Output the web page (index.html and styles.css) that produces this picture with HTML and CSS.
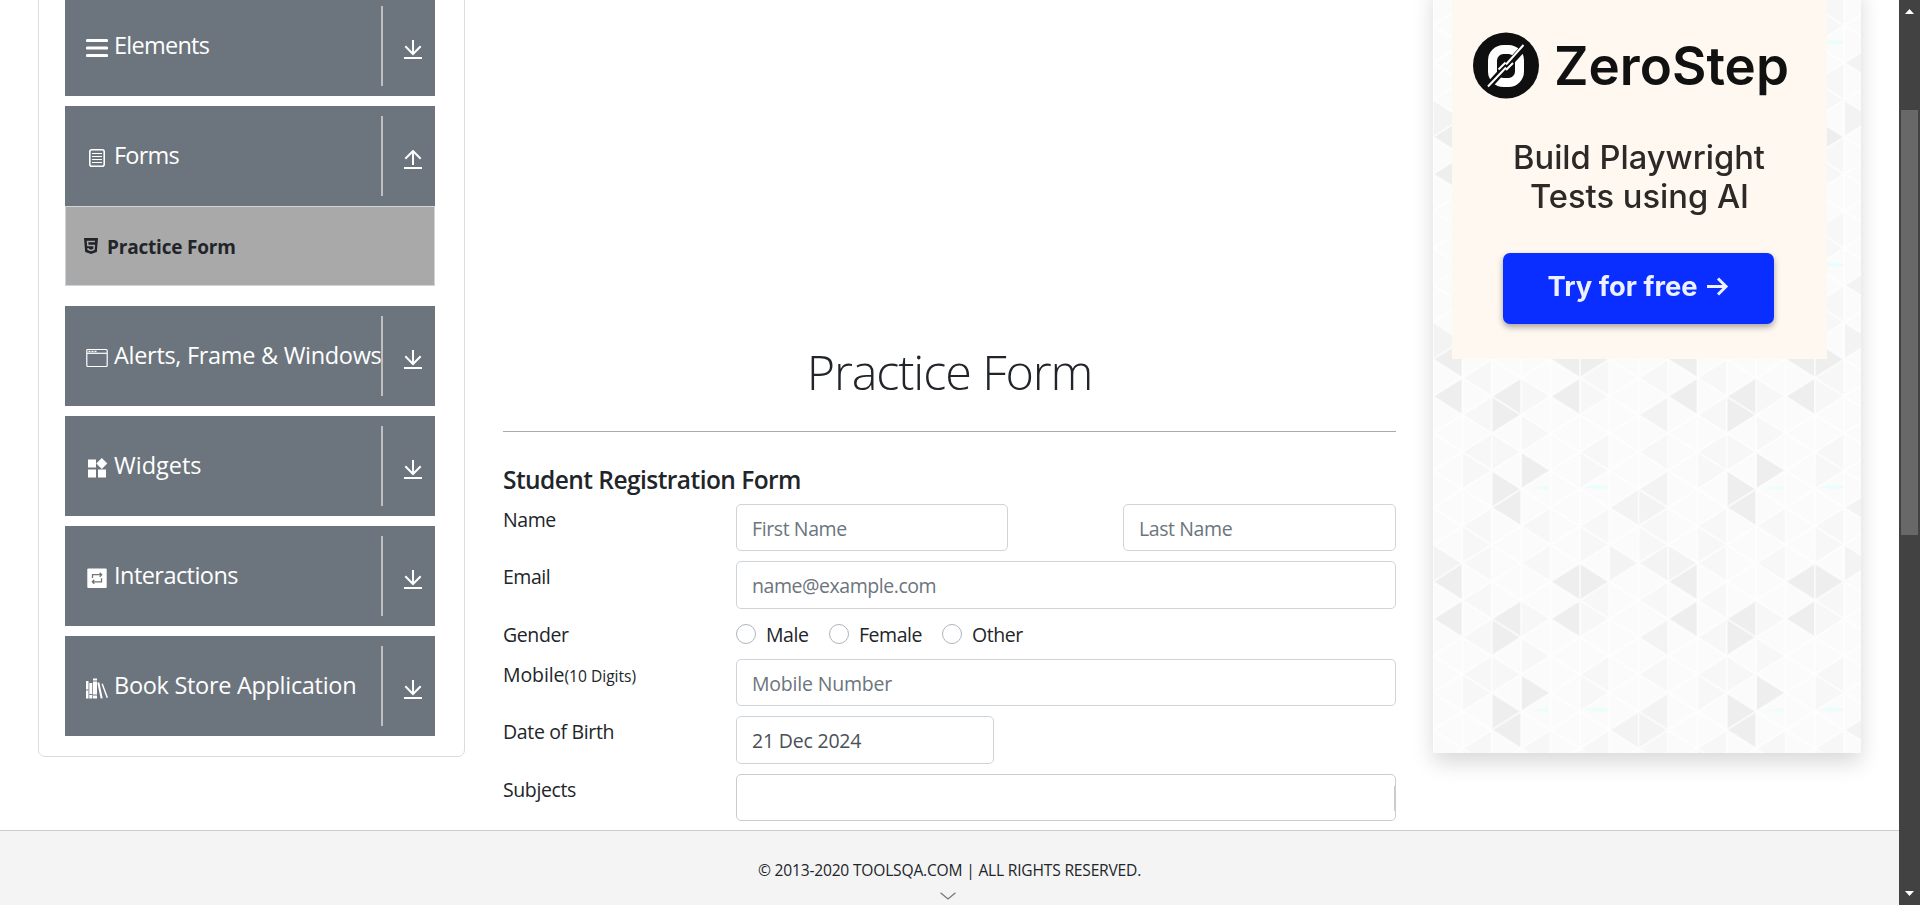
FILE: index.html
```html
<!DOCTYPE html>
<html lang="en">
<head>
<meta charset="utf-8">
<title>Practice Form</title>
<link rel="stylesheet" href="styles.css">
</head>
<body>
<svg class="defs" width="0" height="0">
  <symbol id="down" viewBox="0 0 18 20"><path d="M9 0v14M1.300 6.300 9 14l7.700-7.700M0 18h18" fill="none" stroke="#fff" stroke-width="2"/></symbol>
  <symbol id="up" viewBox="0 0 18 20"><path d="M9 15V1M1.300 8.700 9 1l7.700 7.700M0 18h18" fill="none" stroke="#fff" stroke-width="2"/></symbol>
</svg>
<div class="page">
  <div class="content">
    <nav class="sidebar">
      <div class="group">
        <svg class="icon" viewBox="0 0 22 22"><path d="M1.500 3.500h19M1.500 11h19M1.500 18.500h19" stroke="#fff" stroke-width="3.200" stroke-linecap="round"/></svg>
        <span class="name t-elements">Elements</span><span class="toggle"><svg class="arrow"><use href="#down"/></svg></span>
      </div>
      <div class="group open">
        <svg class="icon" viewBox="0 0 22 22"><rect x="3.800" y="2.800" width="14.400" height="16.400" rx="2" fill="none" stroke="#fff" stroke-width="1.600"/><path d="M6 6.500h10M6 9.500h10M6 12.500h10M6 15.500h10" stroke="#fff" stroke-width="1"/></svg>
        <span class="name t-forms">Forms</span><span class="toggle"><svg class="arrow"><use href="#up"/></svg></span>
      </div>
      <div class="sub">
        <svg class="html5" viewBox="0 0 14 16"><path d="M0 0h14l-1.200 14L7 16l-5.800-2z" fill="#212529"/><path d="M11 3.500H3.500l.3 4h6.500l-.4 4L7 12.500l-2.800-1-.1-1.500" fill="none" stroke="#a9a9a9" stroke-width="1.500"/></svg>
        <span class="subname">Practice Form</span>
      </div>
      <div class="group">
        <svg class="icon" viewBox="0 0 22 22"><rect x=".8" y="2.500" width="20.400" height="17" rx="1" fill="none" stroke="#fff" stroke-width="1.200"/><path d="M1 6.300h20" stroke="#fff" stroke-width="1.200"/><path d="M2.500 4.400h8.500" stroke="#fff" stroke-width="1.500" stroke-dasharray="2 1"/></svg>
        <span class="name t-alerts">Alerts, Frame &amp; Windows</span><span class="toggle"><svg class="arrow"><use href="#down"/></svg></span>
      </div>
      <div class="group">
        <svg class="icon" viewBox="0 0 22 22"><path d="M2 2.500h8v8H2zM2 12.500h8v8H2zM12 12.500h8v8h-8zM15.800 1l5.500 5.500-5.500 5.500-5.500-5.500z" fill="#fff"/></svg>
        <span class="name t-widgets">Widgets</span><span class="toggle"><svg class="arrow"><use href="#down"/></svg></span>
      </div>
      <div class="group">
        <svg class="icon" viewBox="0 0 22 22"><rect x="1.300" y="1.600" width="19.400" height="19.400" rx="1" fill="#fff"/><path d="M6.500 11V7.700h9M13.700 5.700l2 2-2 2M15.500 11.300v3.500h-9M8.300 12.800l-2 2 2 2" fill="none" stroke="#6c757d" stroke-width="1.300"/></svg>
        <span class="name t-inter">Interactions</span><span class="toggle"><svg class="arrow"><use href="#down"/></svg></span>
      </div>
      <div class="group">
        <svg class="icon" viewBox="0 0 22 22"><path d="M0 4h2.500v17.500H0zM3.300 6h3v15.500h-3zM7 1.500h4v20H7zM11.300 5.700l2-.5 3.400 16-2 .4zM15.500 7l1.300-.5 5.200 14-1.400.5z" fill="#fff"/><path d="M0 13h2.500M3.300 17.500h3M7 4h4M7 18h4" stroke="#6c757d" stroke-width="1"/></svg>
        <span class="name t-book">Book Store Application</span><span class="toggle"><svg class="arrow"><use href="#down"/></svg></span>
      </div>
    </nav>

    <main class="form">
      <h1 class="title"><span>Practice Form</span></h1>
      <h5 class="subtitle">Student Registration Form</h5>
      <div class="rows">
        <div class="row"><label class="label l-name">Name</label><div class="pair"><div class="input first"><span class="i-first">First Name</span></div><div class="input last"><span class="i-last">Last Name</span></div></div></div>
        <div class="row tall"><label class="label l-email">Email</label><div class="input"><span class="i-email">name@example.com</span></div></div>
        <div class="row gender"><label class="label l-gender">Gender</label>
          <div class="radios"><span class="radio"></span><span class="opt male">Male</span><span class="radio"></span><span class="opt female">Female</span><span class="radio"></span><span class="opt other">Other</span></div></div>
        <div class="row"><label class="label l-mobile">Mobile<small>(10 Digits)</small></label><div class="input"><span class="i-mobile">Mobile Number</span></div></div>
        <div class="row tall"><label class="label l-dob">Date of Birth</label><div class="input date"><span class="i-date">21 Dec 2024</span></div></div>
        <div class="row"><label class="label l-subj">Subjects</label><div class="input subjects"><i class="bar"></i></div></div>
      </div>
    </main>

    <aside class="panel">
      <svg class="mesh" width="428" height="769">
        <defs>
          <pattern id="tri" width="235" height="222.400" patternUnits="userSpaceOnUse" patternTransform="translate(0 375.300)">
            <rect width="235" height="222.400" fill="#fbfbfb"/>
            <g id="shades" transform="scale(29.375 18.533)">
              <path fill="#f7f7f7" d="M1 5l1-1v2zM7 5l1-1v2zM1 3l1-1v2zM3 5l-1-1v2zM4 4l-1-1v2zM1 9l1-1v2zM5 9l1-1v2zM3 9l1-1v2zM3 11l1-1v2zM1 11l1-1v2zM5 1l1-1v2zM6 2l-1-1v2zM4 2l-1-1v2zM1 1l1-1v2zM2 6l-1-1v2zM8 10l-1-1v2zM5 5l1-1v2zM6 10l-1-1v2zM7 1l1-1v2zM7 9l1-1v2zM2 10l-1-1v2zM6 6l-1-1v2z"/>
              <path fill="#f3f3f3" d="M7 3l1-1v2zM6 8l1-1v2zM8 8l-1-1v2zM7 7l1-1v2zM7 11l-1-1v2zM7 11l1-1v2zM1 11l-1-1v2z"/>
              <path fill="#eeeeee" d="M0 2l1-1v2zM2 2l1-1v2zM3 3l-1-1v2zM4 2l1-1v2zM4 6l-1-1v2zM3 7l-1-1v2zM2 8l1-1v2zM0 0l1-1v2zM0 12l1-1v2zM4 0l1-1v2zM4 12l1-1v2zM6 0l-1-1v2zM6 12l-1-1v2z"/>
              <path fill="none" stroke="#fff" stroke-opacity=".75" stroke-width="1.700" vector-effect="non-scaling-stroke" d="M0 0v12M1 0v12M2 0v12M3 0v12M4 0v12M5 0v12M6 0v12M7 0v12M8 0v12M0 0l8 8M0 2l8 8M0 4l8 8M0 6l6 6M0 8l4 4M0 10l2 2M2 0l6 6M4 0l4 4M6 0l2 2M0 2l2-2M0 4l4-4M0 6l6-6M0 8l8-8M0 10l8-8M0 12l8-8M2 12l6-6M4 12l4-4M6 12l2-2"/>
            </g>
            <path d="M97 129l18-2v3zM150 128l12-2 14 1-4 3z" fill="#e6fffc"/>
          </pattern>
        </defs>
        <rect width="428" height="769" fill="url(#tri)"/>
      </svg>
      <svg class="ad" viewBox="0 0 375 375">
        <rect width="375" height="375" fill="#fef8f1"/>
        <g class="soft">
          <circle cx="54" cy="81.500" r="33" fill="#0f0f0f"/>
          <rect x="40.500" y="65.500" width="27" height="33" rx="11" fill="none" stroke="#fff" stroke-width="9"/>
          <path d="M33 106 75 60" stroke="#0f0f0f" stroke-width="7"/>
          <path d="M36 102.500 54 83.500M54 80.500 71.500 61M46.500 85.500l7-7M54 86l7-7" stroke="#fff" stroke-width="2"/>
          <text x="102" y="100.500" font-size="53" font-weight="600" textLength="235" lengthAdjust="spacingAndGlyphs" fill="#111">ZeroStep</text>
          <text x="61" y="184.500" font-size="32.500" font-weight="550" textLength="252" lengthAdjust="spacingAndGlyphs" fill="#2c2927">Build Playwright</text>
          <text x="78" y="223.500" font-size="32.500" font-weight="550" textLength="219" lengthAdjust="spacingAndGlyphs" fill="#2c2927">Tests using AI</text>
          <rect class="cta" x="51" y="269" width="271" height="71" rx="7" fill="#092eff"/>
          <text x="95.500" y="312" font-size="27" font-weight="700" textLength="150" lengthAdjust="spacingAndGlyphs" fill="#edf0ff">Try for free</text>
          <path d="M255 302.500h18M266 294.500l8 8-8 8" fill="none" stroke="#edf0ff" stroke-width="3"/>
        </g>
      </svg>
    </aside>
  </div>
  <footer class="footer">
    <span class="copy">© 2013-2020 TOOLSQA.COM | ALL RIGHTS RESERVED.</span>
    <svg class="chev" viewBox="0 0 16 8"><path d="M.5.700 8 7l7.500-6.300" fill="none" stroke="#777" stroke-width="1.300"/></svg>
  </footer>
</div>
<div class="scrollbar">
  <svg class="tip" viewBox="0 0 9 5"><path d="M0 5 4.500 0 9 5z" fill="#fff"/></svg>
  <div class="thumb"></div>
  <svg class="tip" viewBox="0 0 9 5"><path d="M0 0 4.500 5 9 0z" fill="#fff"/></svg>
</div>
</body>
</html>
```
FILE: styles.css
```css
* { box-sizing: border-box; }
body { margin: 0; width: 1920px; height: 905px; overflow: hidden; display: flex; background: #fff; color: #212529; font: 19.5px/30px "Open Sans", "Noto Sans", sans-serif; white-space: nowrap; }
.defs { position: absolute; }
.page { width: 1899px; height: 905px; display: flex; flex-direction: column; }
.content { height: 830px; display: flex; align-items: flex-start; padding-left: 38px; overflow: hidden; }

.sidebar { width: 427px; height: 791px; margin-top: -34px; padding: 29px 29px 0 26px; border: 1px solid #dcdcdc; border-radius: 7px; display: flex; flex-direction: column; flex: none; }
.group { width: 370px; height: 100px; margin-bottom: 10px; padding-left: 21px; background: #6c757d; color: #fff; display: flex; align-items: center; flex: none; }
.group.open { margin-bottom: 0; }
.icon { width: 22px; height: 22px; margin-top: 3px; flex: none; }
.name { width: 267px; margin: -2px 0 0 6px; font-size: 23.5px; line-height: 32px; flex: none; }
.t-elements { letter-spacing: -.75px; }
.t-forms { letter-spacing: -.8px; }
.t-alerts { letter-spacing: -.3px; }
.t-widgets { letter-spacing: 0; }
.t-inter { letter-spacing: -.55px; }
.t-book { letter-spacing: -.3px; }
.toggle { width: 54px; height: 80px; border-left: 2px solid #bfbfbf; padding: 34px 0 0 21px; display: flex; }
.arrow { width: 18px; height: 20px; }
.sub { width: 370px; height: 80px; margin-bottom: 20px; padding-left: 18px; background: #a9a9a9; border: 1px solid #ced4da; display: flex; align-items: center; flex: none; }
.html5 { width: 14px; height: 16px; margin-top: -1px; }
.subname { margin: 2px 0 0 9px; font-weight: 700; font-size: 19px; letter-spacing: -.2px; }

.form { width: 893px; margin-left: 38px; flex: none; display: flex; flex-direction: column; }
.title { margin: 0; height: 432px; padding-top: 335px; border-bottom: 1px solid #a9abac; font-weight: 300; font-size: 48.5px; line-height: 72px; text-align: center; letter-spacing: -1.1px; }
.subtitle { margin: 33px 0 9px; font-weight: 600; font-size: 24.5px; line-height: 30px; letter-spacing: -.55px; }
.rows { display: flex; flex-direction: column; gap: 10px; }
.row { display: flex; height: 47px; }
.row.tall { height: 48px; }
.row.gender { height: 30px; }
.label { width: 233px; padding-top: 1px; flex: none; letter-spacing: -.4px; }
.label small { font-size: 15.6px; letter-spacing: 0; }
.l-email { letter-spacing: -.5px; }
.l-dob { letter-spacing: -.35px; }
.l-mobile { letter-spacing: -.1px; }
.input { flex: 1; border: 1px solid #ced4da; border-radius: 5px; padding: 1px 0 0 15px; color: #6c757d; line-height: 46px; display: flex; }
.pair { flex: 1; display: flex; justify-content: space-between; }
.first { flex: none; width: 272px; letter-spacing: -.4px; }
.last { flex: none; width: 273px; letter-spacing: -.4px; }
.i-email { letter-spacing: -.45px; }
.i-mobile { letter-spacing: -.2px; }
.i-date { letter-spacing: -.2px; }
.date { flex: none; width: 258px; color: #495057; }
.subjects { border-color: #ccc; justify-content: flex-end; align-items: center; }
.bar { width: 1px; height: 25px; background: #ccc; }
.radios { display: flex; }
.radio { width: 20px; height: 20px; margin-top: 5px; border: 1px solid #adb5bd; border-radius: 50%; }
.opt { margin-left: 10px; padding-top: 1px; letter-spacing: -.45px; }
.male { width: 63px; }
.female { width: 83px; }

.panel { position: relative; width: 428px; height: 769px; margin: -16px 0 0 37px; padding-left: 19px; box-shadow: 0 10px 20px rgba(0,0,0,.15); flex: none; }
.mesh { position: absolute; left: 0; top: 0; }
.ad { position: relative; display: block; width: 375px; height: 375px; font-family: Inter, sans-serif; }
.soft { filter: blur(.6px); }
.cta { filter: drop-shadow(0 3px 3px rgba(0,0,0,.35)); }

.footer { height: 75px; border-top: 1px solid #ccc; background: #f4f4f4; display: flex; flex-direction: column; align-items: center; padding-top: 28px; }
.copy { font-size: 15.6px; line-height: 22px; letter-spacing: -.2px; }
.chev { width: 16px; height: 8px; margin: 11px 4px 0 0; }

.scrollbar { width: 21px; height: 905px; background: #424242; display: flex; flex-direction: column; align-items: center; padding: 9px 0; }
.tip { width: 9px; height: 5px; }
.thumb { width: 17px; height: 425px; margin: 96px 0 auto; background: #686868; }
```
